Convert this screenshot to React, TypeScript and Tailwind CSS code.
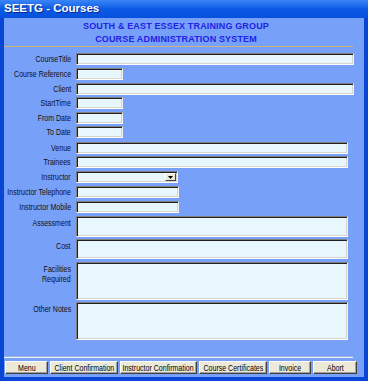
import React from "react";

const font = { fontFamily: '"Liberation Sans", Arial, sans-serif' };

// sunken XP-classic field
const field =
  "bg-[#e8f6fe] border border-t-[#808080] border-l-[#808080] border-b-white border-r-[#f4f2ea] shadow-[inset_1px_1px_0_#202020,inset_-1px_-1px_0_#d8d4c8]";

// the original UI font is a narrow one, squeeze Arial to match
function Narrow({ children, origin }: { children: React.ReactNode; origin: string }) {
  return <span className={`inline-block shrink-0 whitespace-nowrap scale-x-[0.74] ${origin}`}>{children}</span>;
}

type RowProps = {
  label: string[];
  box: string;
  row: string;
  top?: boolean;
  select?: boolean;
};

function Row({ label, box, row, top, select }: RowProps) {
  return (
    <div className={`flex ${top ? "items-start" : "items-center"} ${row}`}>
      <div className={`w-[68px] shrink-0 flex flex-col items-end text-[9.5px] leading-[10px] text-[#111] pr-[1px] ${top ? "pt-[2px]" : ""}`}>
        {label.map((l) => (
          <Narrow key={l} origin="origin-right">
            {l}
          </Narrow>
        ))}
      </div>
      <div className={`ml-[4px] relative ${field} ${box}`}>
        {select && (
          <div className="absolute right-[1px] top-[1px] bottom-[1px] w-[11px] bg-[#ece9d8] border border-t-white border-l-white border-b-[#404040] border-r-[#404040] flex items-center justify-center">
            <svg width="5" height="3" viewBox="0 0 5 3">
              <path d="M0 0h5L2.5 3z" fill="#000" />
            </svg>
          </div>
        )}
      </div>
    </div>
  );
}

const buttons = [
  { t: "Menu", w: "w-[43px]" },
  { t: "Client Confirmation", w: "w-[68px]" },
  { t: "Instructor Confirmation", w: "w-[77px]" },
  { t: "Course Certificates", w: "w-[68px]" },
  { t: "Invoice", w: "w-[42px]" },
  { t: "Abort", w: "w-[44px]" },
];

export default function App() {
  return (
    <div className="w-[368px] h-[381px] flex flex-col overflow-hidden bg-[#0a46d6]" style={font}>
      {/* Title bar */}
      <div className="h-[18px] shrink-0 flex items-center pl-[4px] bg-gradient-to-b from-[#3a85f5] via-[#0a5ae6] to-[#0650dc]">
        <span className="text-white font-bold text-[11.5px] [text-shadow:1px_1px_0_#0a2a90]">SEETG - Courses</span>
      </div>

      {/* Body */}
      <div className="flex-1 mx-[4px] mb-[4px] bg-[#77a0f8] flex flex-col">
        <div className="w-[344px] pt-[2px] text-center text-[#2222e6] font-bold text-[9px] leading-[12.5px] tracking-[0.15px]">
          <div>SOUTH &amp; EAST ESSEX TRAINING GROUP</div>
          <div>COURSE ADMINISTRATION SYSTEM</div>
        </div>
        <div className="mt-[1px] w-[349px] h-[1px] bg-[#ccb478]" />

        <Row label={["CourseTitle"]} row="mt-[6px]" box="w-[278px] h-[12px]" />
        <Row label={["Course Reference"]} row="mt-[3px]" box="w-[47px] h-[12px]" />
        <Row label={["Client"]} row="mt-[3px]" box="w-[278px] h-[12px]" />
        <Row label={["StartTime"]} row="mt-[2px]" box="w-[47px] h-[12px]" />
        <Row label={["From Date"]} row="mt-[3px]" box="w-[47px] h-[12px]" />
        <Row label={["To Date"]} row="mt-[2px]" box="w-[47px] h-[12px]" />
        <Row label={["Venue"]} row="mt-[4px]" box="w-[272px] h-[12px]" />
        <Row label={["Trainees"]} row="mt-[2px]" box="w-[272px] h-[12px]" />
        <Row label={["Instructor"]} row="mt-[3px]" box="w-[102px] h-[12px]" select />
        <Row label={["Instructor Telephone"]} row="mt-[3px]" box="w-[103px] h-[12px]" />
        <Row label={["Instructor Mobile"]} row="mt-[3px]" box="w-[103px] h-[12px]" />
        <Row label={["Assessment"]} row="mt-[3px]" box="w-[272px] h-[21px]" top />
        <Row label={["Cost"]} row="mt-[2px]" box="w-[272px] h-[20px]" top />
        <Row label={["Facilities", "Required"]} row="mt-[3px]" box="w-[272px] h-[38px]" top />
        <Row label={["Other Notes"]} row="mt-[2px]" box="w-[272px] h-[38px]" top />

        {/* separator */}
        <div className="mt-[16px] w-[349px] h-[2px] border-t border-t-[#9cb2dc] border-b border-b-[#eef2fa]" />

        {/* Buttons */}
        <div className="mt-[3px] pl-[1px] flex gap-[2px]">
          {buttons.map((b) => (
            <button
              key={b.t}
              className={`${b.w} h-[13px] shrink-0 bg-[#ece9d8] border border-t-white border-l-white border-b-[#404040] border-r-[#404040] shadow-[inset_-1px_-1px_0_#a0a0a0] text-[9.5px] leading-[10px] text-black flex items-center justify-center`}
            >
              <Narrow origin="origin-center">{b.t}</Narrow>
            </button>
          ))}
        </div>
      </div>
    </div>
  );
}
